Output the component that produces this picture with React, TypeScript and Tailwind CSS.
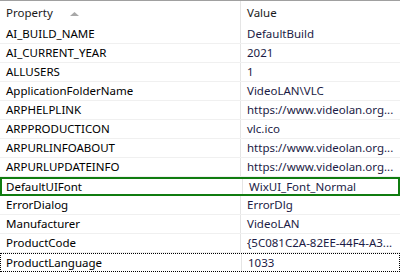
import React from 'react';

const rows: { name: string; value: string }[] = [
  { name: 'AI_BUILD_NAME', value: 'DefaultBuild' },
  { name: 'AI_CURRENT_YEAR', value: '2021' },
  { name: 'ALLUSERS', value: '1' },
  { name: 'ApplicationFolderName', value: 'VideoLAN\\VLC' },
  { name: 'ARPHELPLINK', value: 'https://www.videolan.org...' },
  { name: 'ARPPRODUCTICON', value: 'vlc.ico' },
  { name: 'ARPURLINFOABOUT', value: 'https://www.videolan.org...' },
  { name: 'ARPURLUPDATEINFO', value: 'https://www.videolan.org...' },
  { name: 'DefaultUIFont', value: 'WixUI_Font_Normal' },
  { name: 'ErrorDialog', value: 'ErrorDlg' },
  { name: 'Manufacturer', value: 'VideoLAN' },
  { name: 'ProductCode', value: '{5C081C2A-82EE-44F4-A3...' },
  { name: 'ProductLanguage', value: '1033' },
];

const SELECTED = 'DefaultUIFont';
const FOCUSED = 'ProductLanguage';

export default function App() {
  return (
    <div className="w-[400px] h-[272px] overflow-hidden bg-white text-[11.5px] leading-none font-['Noto_Sans','Open_Sans',sans-serif]">
      {/* column header */}
      <div className="h-[25px] border-t border-[#a0a0a0] grid grid-cols-[241px_1fr] text-[#1a1a1a]">
        <div className="flex items-center pl-[6px] border-r border-[#e5e5e5]">
          <span>Property</span>
          <svg className="ml-[17px] mt-[1px]" width="9" height="4" viewBox="0 0 9 4">
            <path d="M0 4 L4.5 0 L9 4 Z" fill="#a8a8a8" />
          </svg>
        </div>
        <div className="flex items-center pl-[6px]">Value</div>
      </div>

      {/* property rows */}
      {rows.map((r) => {
        const sel = r.name === SELECTED;
        const focus = r.name === FOCUSED;
        return (
          <div
            key={r.name}
            className={`h-[19px] grid grid-cols-[241px_1fr] ${
              sel
                ? 'border-2 border-[#107c10]'
                : focus
                ? 'border border-dotted border-black'
                : 'border-b border-[#f0f0f0]'
            }`}
          >
            <div className={`flex items-center ${sel ? 'pl-[4px]' : focus ? 'pl-[5px]' : 'pl-[6px]'} border-r border-[#e5e5e5] text-black whitespace-nowrap`}>
              {r.name}
            </div>
            <div className="flex items-center pl-[6px] text-[#1b1b45] whitespace-nowrap overflow-hidden">{r.value}</div>
          </div>
        );
      })}
    </div>
  );
}
